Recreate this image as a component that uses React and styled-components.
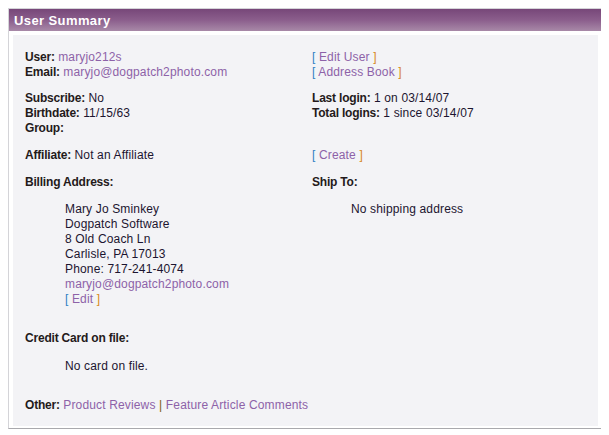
import styled, { createGlobalStyle } from 'styled-components';

const GlobalStyle = createGlobalStyle`
  body {
    margin: 8px;
    background: #fff;
    font-family: "Liberation Sans", Arial, sans-serif;
    font-size: 12px;
    color: #1c1530;
  }
`;

function Bracket({ children }) {
  return (
    <span>
      <Open>[</Open> <Link href="#">{children}</Link> <Close>]</Close>
    </span>
  );
}

function App() {
  return (
    <>
      <GlobalStyle />
      <Box>
        <Header>User Summary</Header>
        <Frame>
          <Panel>
            <Row $gap={0}>
              <Cell>
                <Line><Label>User:</Label> <Link href="#">maryjo212s</Link></Line>
                <Line><Label>Email:</Label> <Link href="#">maryjo@dogpatch2photo.com</Link></Line>
              </Cell>
              <Cell>
                <Line><Bracket>Edit User</Bracket></Line>
                <Line><Bracket>Address Book</Bracket></Line>
              </Cell>
            </Row>
            <Row $gap={11}>
              <Cell>
                <Line><Label>Subscribe:</Label> No</Line>
                <Line><Label>Birthdate:</Label> 11/15/63</Line>
                <Line><Label>Group:</Label></Line>
              </Cell>
              <Cell>
                <Line><Label>Last login:</Label> 1 on 03/14/07</Line>
                <Line><Label>Total logins:</Label> 1 since 03/14/07</Line>
              </Cell>
            </Row>
            <Row $gap={12}>
              <Cell>
                <Line><Label>Affiliate:</Label> Not an Affiliate</Line>
              </Cell>
              <Cell>
                <Line><Bracket>Create</Bracket></Line>
              </Cell>
            </Row>
            <Row $gap={12}>
              <Cell>
                <Line><Label>Billing Address:</Label></Line>
                <Indented>
                  <Line>Mary Jo Sminkey</Line>
                  <Line>Dogpatch Software</Line>
                  <Line>8 Old Coach Ln</Line>
                  <Line>Carlisle, PA 17013</Line>
                  <Line>Phone: 717-241-4074</Line>
                  <Line><Link href="#">maryjo@dogpatch2photo.com</Link></Line>
                  <Line><Bracket>Edit</Bracket></Line>
                </Indented>
              </Cell>
              <Cell>
                <Line><Label>Ship To:</Label></Line>
                <Indented $shift={39}>
                  <Line>No shipping address</Line>
                </Indented>
              </Cell>
            </Row>
            <Section $top={24}>
              <Line><Label>Credit Card on file:</Label></Line>
              <Indented $top={13}>
                <Line>No card on file.</Line>
              </Indented>
            </Section>
            <Section $top={24}>
              <Line>
                <Label>Other:</Label> <Link href="#">Product Reviews</Link> <Pipe>|</Pipe>{' '}
                <Link href="#">Feature Article Comments</Link>
              </Line>
            </Section>
          </Panel>
        </Frame>
      </Box>
    </>
  );
}

const Box = styled.div`
  width: 593px;
  border: 1px solid #d4d4d8;
  border-right-color: #a9a9ad;
  border-bottom-color: #a9a9ad;
  box-shadow: 1px 1px 1px rgba(0, 0, 0, 0.12);
  background: #fff;
`;

const Header = styled.div`
  height: 22px;
  line-height: 23px;
  padding-left: 5px;
  background: linear-gradient(to bottom, #774779 0%, #8b5e8c 50%, #a889a8 100%);
  color: #fff;
  font-weight: bold;
  font-size: 13px;
  letter-spacing: 0.4px;
`;

const Frame = styled.div`
  padding: 4px 4px 2px 4px;
`;

const Panel = styled.div`
  background: #f3f3f6;
  padding: 15px 12px 13px 12px;
`;

const Row = styled.div`
  display: grid;
  grid-template-columns: 287px 1fr;
  margin-top: ${(p) => p.$gap}px;
`;

const Cell = styled.div`
  display: flex;
  flex-direction: column;
`;

const Section = styled.div`
  margin-top: ${(p) => p.$top}px;
`;

const Line = styled.div`
  line-height: 15px;
  white-space: nowrap;
  letter-spacing: 0.15px;
`;

const Indented = styled.div`
  margin-top: ${(p) => p.$top || 12}px;
  padding-left: ${(p) => p.$shift || 40}px;
`;

const Label = styled.span`
  font-weight: bold;
  color: #241a1a;
  letter-spacing: -0.2px;
`;

const Link = styled.a`
  color: #8d62a8;
  text-decoration: none;
`;

const Open = styled.span`
  color: #2f7fc4;
`;

const Close = styled.span`
  color: #d8891c;
`;

const Pipe = styled.span`
  color: #7a5a10;
`;

export default App;
